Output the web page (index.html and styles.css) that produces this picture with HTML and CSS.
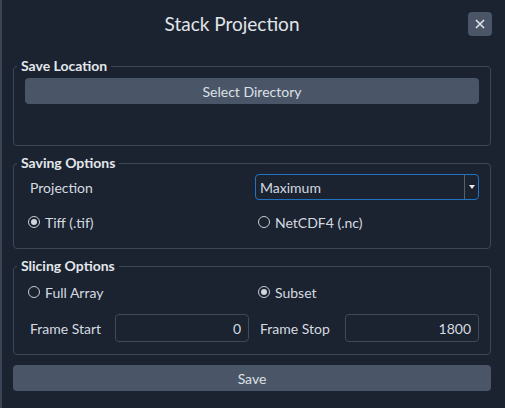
FILE: index.html
```html
<!DOCTYPE html>
<html lang="en">
<head>
  <meta charset="UTF-8" />
  <title>Stack Projection</title>
  <link rel="stylesheet" href="styles.css">
</head>
<body>
  <div class="dialog">
    <div class="header">
      <div class="title">Stack Projection</div>
      <button class="close" title="Close">
        <svg width="10" height="10" viewBox="0 0 10 10"><path d="M1 1L9 9M9 1L1 9" stroke="#e2e6eb" stroke-width="1.6" fill="none"/></svg>
      </button>
    </div>

    <fieldset class="group location">
      <legend>Save Location</legend>
      <button class="btn">Select Directory</button>
    </fieldset>

    <fieldset class="group saving">
      <legend>Saving Options</legend>
      <div class="rows">
        <div class="label">Projection</div>
        <div class="combo">
          <span class="combo-text">Maximum</span>
          <span class="combo-arrow"></span>
        </div>
        <label class="radio"><span class="dot checked"></span>Tiff (.tif)</label>
        <label class="radio"><span class="dot"></span>NetCDF4 (.nc)</label>
      </div>
    </fieldset>

    <fieldset class="group slicing">
      <legend>Slicing Options</legend>
      <div class="rows">
        <label class="radio"><span class="dot"></span>Full Array</label>
        <label class="radio"><span class="dot checked"></span>Subset</label>
        <div class="field">
          <span class="label">Frame Start</span>
          <input class="num" value="0">
        </div>
        <div class="field">
          <span class="label">Frame Stop</span>
          <input class="num" value="1800">
        </div>
      </div>
    </fieldset>

    <button class="btn save">Save</button>
  </div>
</body>
</html>
```

FILE: styles.css
```css
html, body { margin: 0; height: 100%; }
body {
  background: #1b2330;
  border-left: 2px solid #394457;
  box-sizing: border-box;
  font-family: Lato, "Noto Sans", sans-serif;
  font-size: 14px;
  color: #d5dae0;
}
.dialog { padding: 0 14px 0 11px; }

.header {
  display: flex;
  align-items: center;
  height: 58px;
  box-sizing: border-box;
  padding-bottom: 11px;
  margin-left: -11px;
}
.title {
  flex: 1;
  text-align: center;
  font-size: 19px;
  color: #e1e5ea;
}
.close {
  width: 24px; height: 24px;
  margin-left: 6px;
  margin-right: -1px;
  border: none;
  border-radius: 4px;
  background: #4a5567;
  display: flex;
  align-items: center;
  justify-content: center;
  padding: 0;
}

.group {
  margin: 0 0 9px;
  border: 1px solid #3a4759;
  border-radius: 4px;
  padding: 0 11px;
}
.group legend {
  font-weight: bold;
  font-size: 14px;
  line-height: 16px;
  padding: 0 4px;
  margin-left: -8px;
  color: #e3e7ec;
}
.location { padding-bottom: 41px; }
.location .btn { margin-top: 4px; }
.saving { padding-top: 3px; padding-bottom: 13px; }
.slicing { padding-top: 5px; padding-bottom: 12px; }

.btn {
  display: block;
  width: 100%;
  height: 26px;
  border: none;
  border-radius: 4px;
  background: #4a5567;
  color: #dde1e6;
  font-family: inherit;
  font-size: 14px;
  padding: 0;
}
.save { margin-top: 10px; }

.rows {
  display: grid;
  grid-template-columns: minmax(0, 1fr) minmax(0, 1fr);
  column-gap: 6px;
  row-gap: 9px;
  align-items: center;
}
.label { padding-left: 5px; }

.combo {
  height: 26px;
  box-sizing: border-box;
  border: 1px solid #2273c4;
  border-radius: 4px;
  display: flex;
  align-items: center;
}
.combo-text { flex: 1; padding-left: 4px; }
.combo-arrow {
  width: 13px;
  height: 100%;
  border-left: 1px solid #56606f;
  position: relative;
}
.combo-arrow::after {
  content: "";
  position: absolute;
  left: 4px; top: 10px;
  border-left: 3px solid transparent;
  border-right: 3px solid transparent;
  border-top: 4px solid #e6e9ed;
}

.radio {
  display: flex;
  align-items: center;
  height: 26px;
  padding-left: 3px;
}
.dot {
  width: 12px; height: 12px;
  box-sizing: border-box;
  border: 1px solid #c7ccd3;
  border-radius: 50%;
  margin-right: 5px;
  display: flex;
  align-items: center;
  justify-content: center;
}
.dot.checked::after {
  content: "";
  width: 6px; height: 6px;
  border-radius: 50%;
  background: #d2d6dc;
}

.field { display: flex; align-items: center; }
.field .label { width: 90px; box-sizing: border-box; flex: none; }
.num {
  flex: 1;
  width: 0;
  min-width: 0;
  height: 28px;
  box-sizing: border-box;
  border: 1px solid #3d4a5c;
  border-radius: 4px;
  background: transparent;
  color: #d5dae0;
  font-family: inherit;
  font-size: 14px;
  text-align: right;
  padding: 0 7px;
}
```
